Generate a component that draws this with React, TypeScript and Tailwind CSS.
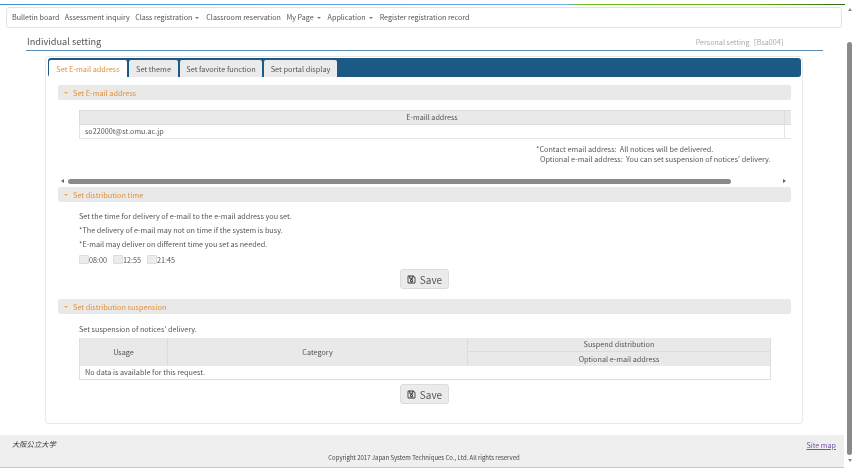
import { FaRegSave } from 'react-icons/fa';

const FONT = '[font-family:"Noto_Sans_CJK_JP","Noto_Sans",sans-serif]';

function SectionHeader({ title }: { title: string }) {
  return (
    <div className="flex h-[15px] items-center rounded-[2px] bg-[#e9e9e9] pl-[6px] text-[7.35px] text-[#e0913a]">
      <span className="mr-[5px] h-0 w-0 border-x-[2px] border-t-[2.5px] border-x-transparent border-t-[#eeaa33]" />
      {title}
    </div>
  );
}

function SaveButton() {
  return (
    <div className="flex justify-center">
      <button className="flex h-[20px] w-[49px] items-center justify-center gap-[4px] rounded-[3px] border border-[#dcdcdc] bg-[#ebebeb] text-[10px] text-[#555]">
        <FaRegSave size={9} className="text-[#333]" />
        Save
      </button>
    </div>
  );
}

function Caret() {
  return <span className="ml-[3px] inline-block h-0 w-0 border-x-[2px] border-t-[2.5px] border-x-transparent border-t-[#777] align-middle" />;
}

const tabs = ['Set E-mail address', 'Set theme', 'Set favorite function', 'Set portal display'];
const tabWidths = ['w-[78px]', 'w-[49px]', 'w-[82px]', 'w-[73px]'];

export default function App() {
  return (
    <div className={`flex h-[470px] w-[858px] overflow-hidden bg-white text-[#555] blur-[0.45px] ${FONT}`}>
      <div className="flex w-[845px] flex-col">
        <div className="mt-[4px] h-px w-full bg-[linear-gradient(90deg,#4a90d0_0%,#70b0e8_67%,#6cc010_69%,#60b010_90%,#2a6a10_100%)]" />
        <nav className="ml-[6px] mt-[2px] flex h-[21px] w-[836px] items-center gap-[5.5px] rounded-[3px] border border-[#e2e2e2] bg-white pl-[5px] text-[7.15px] text-[#555]">
          <span>Bulletin board</span>
          <span>Assessment inquiry</span>
          <span>Class registration<Caret /></span>
          <span className="ml-[1.5px]">Classroom reservation</span>
          <span>My Page<Caret /></span>
          <span className="ml-[1.5px]">Application<Caret /></span>
          <span className="ml-[1.5px]">Register registration record</span>
        </nav>

        <div className="ml-[26px] mt-[6px] flex h-[17px] w-[797px] items-center justify-between border-b border-[#5a8db5] pl-px pr-[35px]">
          <span className="text-[9.2px] text-[#555]">Individual setting</span>
          <span className="text-[7.2px] text-[#aaa]">Personal setting［Bsa004］</span>
        </div>

        <div className="ml-[45px] mt-[5px] h-[368px] w-[758px] rounded-[4px] border border-[#e8e8e8] px-[2px] pt-[1px]">
          <div className="flex h-[19px] w-[753px] items-end gap-[2px] rounded-[3px] bg-[#1a5a85] pl-px">
            {tabs.map((tab, i) => (
              <div
                key={tab}
                className={`flex h-[17px] items-center justify-center rounded-t-[2px] text-[7.35px] ${tabWidths[i]} ${i === 0 ? 'bg-white text-[#e0913a]' : 'bg-[#ebebeb] text-[#555]'}`}
              >
                {tab}
              </div>
            ))}
          </div>

          <div className="ml-[10px] mt-[8px] w-[733px]">
            <SectionHeader title="Set E-mail address" />

            <div className="ml-[21px] mt-[10px] w-[712px] border-b border-[#e4e4e4] text-[7.2px]">
              <div className="flex h-[15px] border-y border-[#dcdcdc] bg-[#e9e9e9]">
                <div className="flex w-[705px] items-center justify-center border-l border-[#dcdcdc]">E-maill address</div>
                <div className="flex-1 border-l border-[#dcdcdc]" />
              </div>
              <div className="flex h-[13px]">
                <div className="flex w-[705px] items-center border-l border-[#e4e4e4] pl-[5px]">so22000t@st.omu.ac.jp</div>
                <div className="flex-1 border-l border-[#e4e4e4]" />
              </div>
            </div>

            <div className="ml-[478px] mt-[5px] text-[7.25px] leading-[10px]">
              <p>*Contact email address:&nbsp; All notices will be delivered.</p>
              <p className="pl-[4px]">Optional e-mail address:&nbsp; You can set suspension of notices' delivery.</p>
            </div>

            <div className="mt-[14px] flex h-[6px] items-center">
              <span className="ml-[3px] h-0 w-0 border-y-[2.5px] border-r-[3.5px] border-y-transparent border-r-[#666]" />
              <div className="ml-[4px] h-[5px] w-[663px] rounded-full bg-[#8a8a8a]" />
              <span className="ml-[52px] h-0 w-0 border-y-[2.5px] border-l-[3.5px] border-y-transparent border-l-[#666]" />
            </div>

            <div className="mt-[3px]">
              <SectionHeader title="Set distribution time" />
            </div>

            <div className="ml-[21px] mt-[7px] text-[7.25px] leading-[14px]">
              <p>Set the time for delivery of e-mail to the e-mail address you set.</p>
              <p>*The delivery of e-mail may not on time if the system is busy.</p>
              <p>*E-mail may deliver on different time you set as needed.</p>
              <div className="mt-[3px] flex h-[11px] items-center">
                {['08:00', '12:55', '21:45'].map((time) => (
                  <label key={time} className="mr-[5px] flex w-[29px] items-center gap-[0.5px]">
                    <span className="h-[9.5px] w-[9.5px] shrink-0 rounded-[1px] border border-[#ddd] bg-[#ececec]" />
                    {time}
                  </label>
                ))}
              </div>
            </div>

            <div className="mt-[4px]">
              <SaveButton />
            </div>

            <div className="mt-[10px]">
              <SectionHeader title="Set distribution suspension" />
            </div>

            <p className="ml-[21px] mt-[10px] text-[7.25px] leading-[10px]">Set suspension of notices' delivery.</p>

            <div className="ml-[21px] mt-[4px] w-[692px] border-x border-b border-[#dfdfdf] text-[7.25px]">
              <div className="flex h-[28px] bg-[#e9e9e9]">
                <div className="flex w-[87px] items-center justify-center">Usage</div>
                <div className="flex w-[300px] items-center justify-center border-l border-[#dcdcdc]">Category</div>
                <div className="flex flex-1 flex-col border-l border-[#dcdcdc]">
                  <div className="flex h-[14px] items-center justify-center border-b border-[#dcdcdc]">Suspend distribution</div>
                  <div className="flex h-[14px] items-center justify-center">Optional e-mail address</div>
                </div>
              </div>
              <div className="flex h-[13px] items-center pl-[5px]">No data is available for this request.</div>
            </div>

            <div className="mt-[4px]">
              <SaveButton />
            </div>
          </div>
        </div>

        <footer className="mt-[11px] h-[33px] w-[844px] border-b border-[#c8c8c8] bg-[#efefef] pl-[12px] pr-[8px]">
          <div className="flex h-[19px] items-center justify-between">
            <span className="text-[7.3px] italic text-[#333]">大阪公立大学</span>
            <a className="pt-[2px] text-[7.2px] text-[#7a4fb0] underline">Site map</a>
          </div>
          <p className="text-center text-[6px] leading-[8px] text-[#444]">Copyright 2017 Japan System Techniques Co., Ltd. All rights reserved</p>
        </footer>
      </div>

      <div className="flex h-[468px] w-[9px] flex-col items-center pt-[8px]">
        <span className="h-0 w-0 border-x-[2.5px] border-b-[3.5px] border-x-transparent border-b-[#888]" />
        <div className="mt-[31px] h-[413px] w-[5px] shrink-0 rounded-full bg-[#8a8a8a]" />
        <span className="mt-[4px] h-0 w-0 border-x-[2.5px] border-t-[3.5px] border-x-transparent border-t-[#888]" />
      </div>
    </div>
  );
}
